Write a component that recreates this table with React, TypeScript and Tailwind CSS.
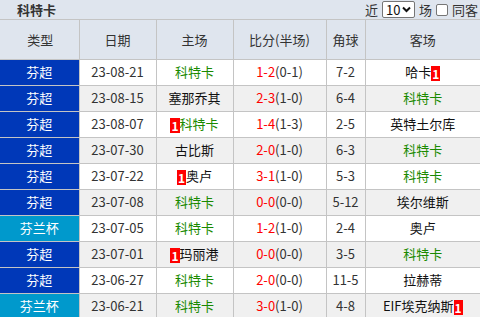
import React from 'react';

type Row = {
  kind: '芬超' | '芬兰杯';
  date: string;
  home: string;
  homeRed?: boolean;
  score: string;
  half: string;
  corner: string;
  away: string;
  awayRed?: boolean;
};

const TEAM = '科特卡';

const rows: Row[] = [
  { kind: '芬超', date: '23-08-21', home: '科特卡', score: '1-2', half: '(0-1)', corner: '7-2', away: '哈卡', awayRed: true },
  { kind: '芬超', date: '23-08-15', home: '塞那乔其', score: '2-3', half: '(1-0)', corner: '6-4', away: '科特卡' },
  { kind: '芬超', date: '23-08-07', home: '科特卡', homeRed: true, score: '1-4', half: '(1-3)', corner: '2-5', away: '英特土尔库' },
  { kind: '芬超', date: '23-07-30', home: '古比斯', score: '2-0', half: '(1-0)', corner: '6-3', away: '科特卡' },
  { kind: '芬超', date: '23-07-22', home: '奥卢', homeRed: true, score: '3-1', half: '(1-0)', corner: '5-3', away: '科特卡' },
  { kind: '芬超', date: '23-07-08', home: '科特卡', score: '0-0', half: '(0-0)', corner: '5-12', away: '埃尔维斯' },
  { kind: '芬兰杯', date: '23-07-05', home: '科特卡', score: '1-2', half: '(1-0)', corner: '2-4', away: '奥卢' },
  { kind: '芬超', date: '23-07-01', home: '玛丽港', homeRed: true, score: '0-0', half: '(0-0)', corner: '3-5', away: '科特卡' },
  { kind: '芬超', date: '23-06-27', home: '科特卡', score: '2-0', half: '(0-0)', corner: '11-5', away: '拉赫蒂' },
  { kind: '芬兰杯', date: '23-06-21', home: '科特卡', score: '3-0', half: '(1-0)', corner: '4-8', away: 'EIF埃克纳斯', awayRed: true },
];

// 红牌标记
const Card = () => (
  <span className="inline-block bg-[#ff0000] text-white font-bold text-[12px] leading-[15px] px-[1px] align-middle">1</span>
);

const Team = ({ name }: { name: string }) => (
  <span className={name === TEAM ? 'text-[#1a8a00]' : 'text-[#111]'}>{name}</span>
);

export default function App() {
  return (
    <div className="w-[480px] h-[317px] overflow-hidden bg-white text-[13px] text-[#333] font-['Noto_Sans_CJK_SC','Noto_Sans',sans-serif]">
      {/* title bar */}
      <div className="h-[20px] bg-[#dfe5ee] flex items-center border-b border-[#c4c4c4]">
        <span className="ml-[17px] font-bold text-[13px] text-[#333]">科特卡</span>
        <div className="ml-auto flex items-center gap-[4px] mr-[2px] text-[13px] text-[#333]">
          <span>近</span>
          <div className="h-[17px] w-[33px] bg-white border border-[#767676] rounded-[2px] flex items-center pl-[3px] text-[13px] leading-none text-[#111]">
            10
            <svg width="9" height="7" viewBox="0 0 9 7" className="ml-[2px]">
              <path d="M1 1.5 L4.5 5 L8 1.5" stroke="#111" strokeWidth="2" fill="none" />
            </svg>
          </div>
          <span>场</span>
          <span className="inline-block w-[12px] h-[12px] bg-white border border-[#767676] rounded-[2px]" />
          <span>同客</span>
        </div>
      </div>

      <table className="w-[480px] table-fixed border-collapse">
        <colgroup>
          <col className="w-[79px]" />
          <col className="w-[77px]" />
          <col className="w-[77px]" />
          <col className="w-[93px]" />
          <col className="w-[39px]" />
          <col className="w-[115px]" />
        </colgroup>
        <thead>
          <tr className="h-[39px] bg-[#dfe5ee] text-[#333]">
            {['类型', '日期', '主场', '比分(半场)', '角球', '客场'].map((h, i) => (
              <th key={h} className={`font-normal text-center border-b border-[#c4c4c4] ${i < 5 ? 'border-r' : ''} ${i === 0 ? 'pl-[2px]' : ''}`}>
                {h}
              </th>
            ))}
          </tr>
        </thead>
        <tbody>
          {rows.map((r, i) => (
            <tr key={r.date} className={`h-[26px] ${i % 2 === 0 ? 'bg-white' : 'bg-[#f0f0f0]'}`}>
              <td className={`text-center text-white border-b border-[#c4c4c4] ${r.kind === '芬超' ? 'bg-[#0038b8]' : 'bg-[#0099cc]'}`}>
                {r.kind}
              </td>
              <td className="text-center border-b border-l border-[#c4c4c4]">{r.date}</td>
              <td className="text-center border-b border-l border-[#c4c4c4] whitespace-nowrap">
                {r.homeRed && <Card />}
                <Team name={r.home} />
              </td>
              <td className="text-center border-b border-l border-[#c4c4c4]">
                <span className="text-[#ff0000]">{r.score}</span>
                {r.half}
              </td>
              <td className="text-center border-b border-l border-[#c4c4c4]">{r.corner}</td>
              <td className="text-center border-b border-l border-[#c4c4c4] whitespace-nowrap">
                <Team name={r.away} />
                {r.awayRed && <Card />}
              </td>
            </tr>
          ))}
        </tbody>
      </table>
    </div>
  );
}
